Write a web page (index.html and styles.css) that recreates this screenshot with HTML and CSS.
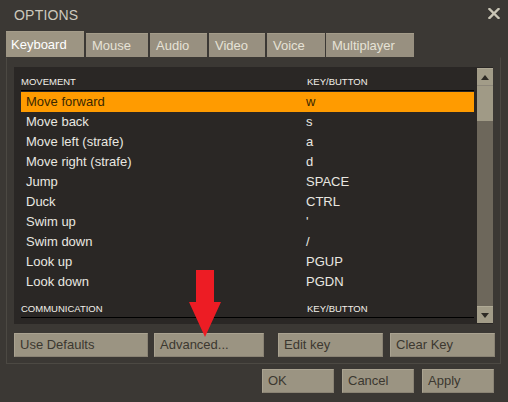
FILE: index.html
```html
<!DOCTYPE html>
<html>
<head>
<meta charset="utf-8">
<link rel="stylesheet" href="styles.css">
</head>
<body>
<div class="window">
  <div class="titlebar">
    <span class="title">OPTIONS</span>
    <svg class="close" width="12" height="11" viewBox="0 0 12 11"><path d="M1.5 1 L10.5 10 M10.5 1 L1.5 10" stroke="#c9c5b5" stroke-width="2.4" stroke-linecap="square"/></svg>
  </div>
  <div class="tabs">
    <div class="tab active t-kb">Keyboard</div>
    <div class="tab t-mouse">Mouse</div>
    <div class="tab t-audio">Audio</div>
    <div class="tab t-video">Video</div>
    <div class="tab t-voice">Voice</div>
    <div class="tab t-multi">Multiplayer</div>
  </div>
  <div class="panel">
    <div class="list">
      <div class="content">
        <div class="section first"><span class="c1">MOVEMENT</span><span class="c2">KEY/BUTTON</span></div>
        <div class="row selected"><span class="c1">Move forward</span><span class="c2">w</span></div>
        <div class="row"><span class="c1">Move back</span><span class="c2">s</span></div>
        <div class="row"><span class="c1">Move left (strafe)</span><span class="c2">a</span></div>
        <div class="row"><span class="c1">Move right (strafe)</span><span class="c2">d</span></div>
        <div class="row"><span class="c1">Jump</span><span class="c2">SPACE</span></div>
        <div class="row"><span class="c1">Duck</span><span class="c2">CTRL</span></div>
        <div class="row"><span class="c1">Swim up</span><span class="c2">'</span></div>
        <div class="row"><span class="c1">Swim down</span><span class="c2">/</span></div>
        <div class="row"><span class="c1">Look up</span><span class="c2">PGUP</span></div>
        <div class="row"><span class="c1">Look down</span><span class="c2">PGDN</span></div>
        <div class="section"><span class="c1">COMMUNICATION</span><span class="c2">KEY/BUTTON</span></div>
      </div>
      <div class="scrollbar">
        <div class="sb-btn"><svg width="8" height="5" viewBox="0 0 8 5"><path d="M0 5 L4 0 L8 5 Z" fill="#2d2a25"/></svg></div>
        <div class="sb-thumb"></div>
        <div class="sb-track"></div>
        <div class="sb-btn"><svg width="8" height="5" viewBox="0 0 8 5"><path d="M0 0 L8 0 L4 5 Z" fill="#2d2a25"/></svg></div>
      </div>
    </div>
    <div class="actions">
      <div class="btn b-defaults">Use Defaults</div>
      <div class="btn b-advanced">Advanced...</div>
      <div class="btn b-edit">Edit key</div>
      <div class="btn b-clear">Clear Key</div>
    </div>
  </div>
  <div class="footer">
    <div class="btn b-foot">OK</div>
    <div class="btn b-foot">Cancel</div>
    <div class="btn b-foot">Apply</div>
  </div>
  <svg class="arrow" width="34" height="68" viewBox="0 0 34 68"><path d="M7 0 H25 V32 H32 L16 67 L0 32 H7 Z" fill="#ed1c24"/></svg>
</div>
</body>
</html>
```

FILE: styles.css
```css
* { box-sizing: border-box; }
html, body { margin: 0; padding: 0; }
body {
  width: 508px;
  height: 402px;
  background: #3b3834;
  font-family: "Liberation Sans", Arial, sans-serif;
  font-size: 13px;
  overflow: hidden;
}
.window {
  position: relative;
  width: 508px;
  height: 402px;
}
.titlebar {
  height: 31px;
  display: flex;
  align-items: center;
  justify-content: space-between;
  padding: 0 8px 1px 14px;
}
.title {
  color: #cdc9bd;
  font-size: 14px;
  letter-spacing: 0.2px;
}
.close { margin-top: -3px; }
.tabs {
  display: flex;
  align-items: flex-end;
  height: 26px;
  padding-left: 6px;
  gap: 2px;
}
.tab {
  height: 24px;
  background: #989080;
  color: #e6e2d6;
  padding: 5px 0 0 6px;
  line-height: 14px;
  border-top: 1px solid #a49c8a;
}
.tab.active {
  height: 26px;
  background: #9d9583;
  color: #ffffff;
  padding-left: 5px;
  padding-top: 6px;
}
.t-kb { width: 78px; }
.t-mouse { width: 62px; }
.t-audio { width: 57px; }
.t-video { width: 56px; }
.t-voice { width: 58px; margin-right: -1px; }
.t-multi { width: 88px; }
.panel {
  margin: 0 7px 0 6px;
  height: 307px;
  border: 1px solid #4c4943;
  border-top-color: #3b3834;
  padding: 9px 0 0 7px;
}
.list {
  display: flex;
  width: 479px;
  height: 257px;
  background: #2a2725;
}
.content {
  flex: 1;
  padding: 5px 3px 0 7px;
  overflow: hidden;
}
.section {
  display: flex;
  height: 19px;
  padding-top: 3px;
  border-bottom: 1px solid #000;
  color: #f2f0ea;
  font-size: 9.5px;
  line-height: 13px;
  margin-top: 7px;
  margin-bottom: 1px;
}
.section.first { margin-top: 0; }
.section .c2 { margin-left: 1px; }
.row {
  display: flex;
  height: 20px;
  line-height: 20px;
  color: #e9e7e1;
  padding-left: 5px;
}
.row.selected {
  background: #ff9b00;
  color: #3a2800;
}
.c1 { width: 285px; flex: none; }
.section .c1 { width: 285px; }
.row .c1 { width: 280px; }
.scrollbar {
  width: 16px;
  display: flex;
  flex-direction: column;
  padding: 1px 0;
}
.sb-btn {
  height: 17px;
  background: #a29c88;
  display: flex;
  align-items: center;
  justify-content: center;
  border-top: 1px solid #b0aa96;
}
.sb-thumb {
  height: 36px;
  background: #a09a86;
  border-top: 1px solid #8d877a;
}
.sb-track {
  flex: 1;
  background: #6d675b;
}
.actions {
  display: flex;
  margin-top: 9px;
}
.btn {
  height: 24px;
  background: #9b9482;
  border: 1px solid #aaa391;
  border-right-color: #8a8374;
  border-bottom-color: #8a8374;
  color: #3c3830;
  line-height: 22px;
  padding-left: 5px;
}
.b-defaults { width: 134px; }
.b-advanced { width: 110px; margin-left: 6px; }
.b-edit { width: 105px; margin-left: 14px; }
.b-clear { width: 105px; margin-left: 7px; }
.footer {
  display: flex;
  gap: 8px;
  margin-top: 5px;
  padding-left: 262px;
}
.b-foot { width: 72px; height: 24px; }
.arrow {
  position: absolute;
  left: 189px;
  top: 270px;
}
```
